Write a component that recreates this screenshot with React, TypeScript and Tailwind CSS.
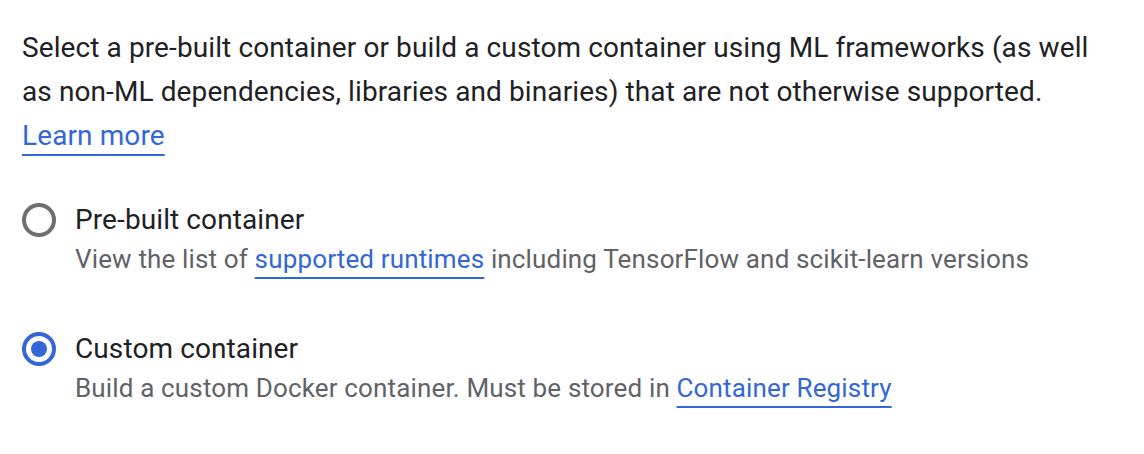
const linkCls =
  'text-[#3367d6] underline decoration-2 underline-offset-[9px] decoration-[#3367d6]'

function Radio({ checked }: { checked: boolean }) {
  return (
    <div
      className={`w-[34px] h-[34px] rounded-full border-[4px] flex items-center justify-center shrink-0 ${
        checked ? 'border-[#3367d6]' : 'border-[#6e6e6e]'
      }`}
    >
      {checked && <div className="w-[16px] h-[16px] rounded-full bg-[#3367d6]" />}
    </div>
  )
}

export default function App() {
  return (
    <div
      className="w-[1144px] h-[454px] bg-white px-[22px] pt-[26px] text-[#202124]"
      style={{ fontFamily: 'Roboto, "Noto Sans", sans-serif' }}
    >
      {/* Intro */}
      <p className="max-w-[1090px] text-[28px] leading-[44px] tracking-[0.1px]">
        Select a pre-built container or build a custom container using ML frameworks (as well as
        non-ML dependencies, libraries and binaries) that are not otherwise supported.
        <br />
        <a className={linkCls}>Learn more</a>
      </p>

      {/* Options */}
      <div className="mt-[43px] flex flex-col gap-[51px]">
        <div className="flex gap-[19px]">
          <div className="pt-[2px]">
            <Radio checked={false} />
          </div>
          <div>
            <div className="text-[28px] leading-[38px] tracking-[0.1px] text-[#202124]">
              Pre-built container
            </div>
            <div className="text-[26px] leading-[40px] tracking-[0.15px] text-[#5f6368]">
              View the list of <a className={linkCls}>supported runtimes</a> including TensorFlow
              and scikit-learn versions
            </div>
          </div>
        </div>

        <div className="flex gap-[19px]">
          <div className="pt-[2px]">
            <Radio checked={true} />
          </div>
          <div>
            <div className="text-[28px] leading-[38px] tracking-[0.1px] text-[#202124]">
              Custom container
            </div>
            <div className="text-[26px] leading-[40px] tracking-[0.15px] text-[#5f6368]">
              Build a custom Docker container. Must be stored in{' '}
              <a className={linkCls}>Container Registry</a>
            </div>
          </div>
        </div>
      </div>
    </div>
  )
}
